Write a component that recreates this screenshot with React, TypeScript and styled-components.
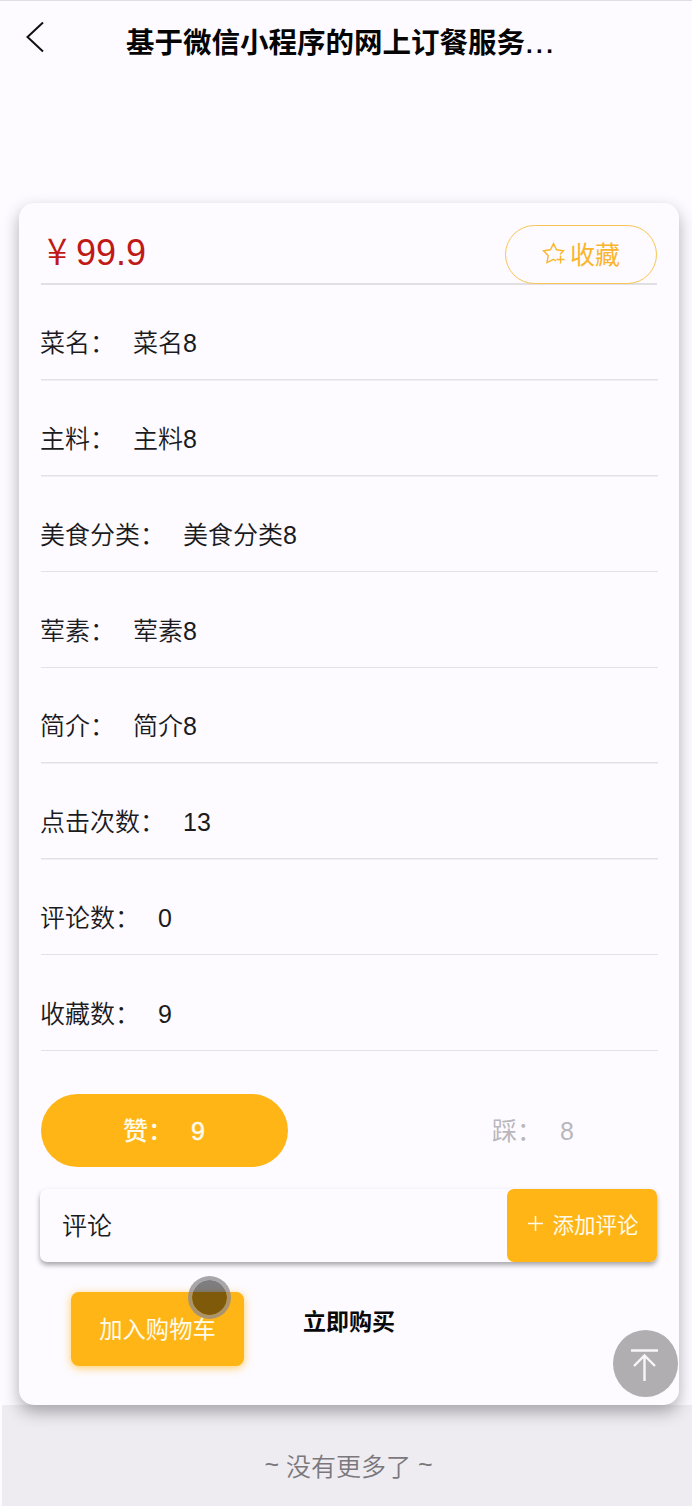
import React from "react";
import styled, { createGlobalStyle } from "styled-components";

const GlobalStyle = createGlobalStyle`
  * { box-sizing: border-box; }
  body {
    margin: 0;
    background: #fdfbff;
    color: #1b1a1d;
    font-family: "Liberation Sans", "Noto Sans CJK SC", sans-serif;
  }
  button { font: inherit; border: 0; margin: 0; padding: 0; }
`;

const orange = "#ffb516";

const Page = styled.main`
  position: relative;
  width: 692px;
  height: 1506px;
  overflow: hidden;
  display: flex;
  flex-direction: column;
`;

const Header = styled.header`
  height: 203px;
  flex: none;
  border-top: 1px solid #e0dee2;
  display: flex;
  align-items: flex-start;
`;

const BackIcon = styled.svg`
  width: 20px;
  height: 32px;
  margin: 20px 0 0 25px;
`;

const Title = styled.h1`
  margin: 21px 0 0 81px;
  font-size: 28.5px;
  line-height: 42px;
  font-weight: 700;
  color: #050506;
  white-space: nowrap;
`;

const Dots = styled.span`
  margin-left: 1px;
  font-size: 24px;
  letter-spacing: 3.4px;
`;

const Card = styled.section`
  position: relative;
  z-index: 1;
  flex: none;
  width: 660px;
  height: 1202px;
  margin-left: 19px;
  padding: 0 22px;
  border-radius: 15px;
  background: #fdfbff;
  box-shadow: 0 7px 16px rgba(50, 46, 56, 0.38);
`;

const PriceRow = styled.div`
  height: 82px;
  display: flex;
  justify-content: space-between;
  align-items: flex-end;
  border-bottom: 2px solid #e1dfe3;
`;

const Price = styled.div`
  display: flex;
  align-items: baseline;
  margin-left: 6px;
  height: 64px;
  font-size: 36px;
  line-height: 60px;
  color: #c01a16;
`;

const Yen = styled.span`
  width: 29px;
  font-family: "Noto Sans CJK SC", sans-serif;
  font-size: 37px;
  font-weight: 350;
`;

const FavoriteButton = styled.button`
  width: 152px;
  height: 59px;
  margin-bottom: -1px;
  padding: 0 0 3px;
  border: 1.5px solid #f8c455;
  border-radius: 30px;
  background: transparent;
  color: #f9b52c;
  font-size: 25px;
  display: flex;
  align-items: center;
  justify-content: center;
  gap: 3px;
`;

const StarIcon = styled.svg`
  width: 25px;
  height: 25px;
`;

const InfoRow = styled.div`
  height: 95.75px;
  display: flex;
  align-items: flex-end;
  gap: 18px;
  margin: 0 -1px;
  padding-bottom: 19.5px;
  font-size: 25px;
  line-height: 36px;
  font-weight: 350;
  background: linear-gradient(#e3e1e6, #e3e1e6) 1px 100% / 100% 1.5px no-repeat;
`;

const Votes = styled.div`
  display: flex;
  justify-content: space-between;
  margin-top: 43px;
`;

const VoteButton = styled.button<{ $active?: boolean }>`
  width: 247px;
  height: 73px;
  padding-right: 1px;
  border-radius: 37px;
  display: flex;
  align-items: baseline;
  justify-content: center;
  gap: 18px;
  font-size: 25px;
  line-height: 74px;
  font-weight: ${(p) => (p.$active ? 500 : 400)};
  background: ${(p) => (p.$active ? orange : "transparent")};
  color: ${(p) => (p.$active ? "#fffbea" : "#b9b7bb")};
`;

const Count = styled.span<{ $active?: boolean }>`
  -webkit-text-stroke: ${(p) => (p.$active ? "0.5px currentColor" : "0")};
`;

const CommentBar = styled.div`
  display: flex;
  justify-content: space-between;
  height: 73px;
  margin: 22px 0 0 -1px;
  border-radius: 7px;
  box-shadow: 0 3px 5px rgba(45, 42, 50, 0.42);
`;

const CommentLabel = styled.span`
  padding-left: 22px;
  font-size: 25px;
  line-height: 74px;
  font-weight: 350;
`;

const AddComment = styled.button`
  width: 150px;
  height: 73px;
  padding: 0 0 4px 2px;
  border-radius: 7px;
  background: ${orange};
  color: #fffbea;
  font-size: 21.5px;
  display: flex;
  align-items: center;
  justify-content: center;
  gap: 8px;
`;

const PlusIcon = styled.svg`
  width: 17px;
  height: 17px;
`;

const Actions = styled.div`
  display: flex;
  align-items: flex-start;
  margin: 30px 0 0 30px;
`;

const CartButton = styled.button`
  width: 173px;
  height: 74px;
  padding-bottom: 3px;
  border-radius: 8px;
  background: ${orange};
  color: #fffbea;
  font-size: 23.3px;
  box-shadow: 0 2px 9px rgba(255, 181, 22, 0.65);
`;

const BuyButton = styled.button`
  margin-left: 59px;
  height: 55px;
  background: transparent;
  color: #09090a;
  font-size: 23px;
  font-weight: 700;
`;

const Footer = styled.footer`
  flex: 1;
  margin-left: 2px;
  display: flex;
  justify-content: center;
  align-items: center;
  padding: 18px 0 0 3px;
  gap: 7px;
  background: #eeecf0;
  color: #7a787d;
  font-size: 25px;
  font-weight: 350;
`;

const BackToTop = styled.button`
  position: absolute;
  z-index: 2;
  left: 613px;
  top: 1330px;
  width: 65px;
  height: 67px;
  border-radius: 50%;
  background: #b0aeb1;
`;

const TouchPoint = styled.div`
  position: absolute;
  z-index: 2;
  left: 188px;
  top: 1276px;
  width: 43px;
  height: 43px;
  border-radius: 50%;
  border: 4px solid rgba(140, 138, 140, 0.75);
  background: rgba(0, 0, 0, 0.5);
  background-clip: padding-box;
`;

const details = [
  ["菜名", "菜名8"],
  ["主料", "主料8"],
  ["美食分类", "美食分类8"],
  ["荤素", "荤素8"],
  ["简介", "简介8"],
  ["点击次数", "13"],
  ["评论数", "0"],
  ["收藏数", "9"],
];

export default function App() {
  return (
    <Page>
      <GlobalStyle />
      <Header>
        <BackIcon viewBox="0 0 20 32" fill="none" stroke="#111" strokeWidth="2">
          <path d="M18 1.5 2.500 16 18 30.5" />
        </BackIcon>
        <Title>
          基于微信小程序的网上订餐服务<Dots>...</Dots>
        </Title>
      </Header>

      <Card>
        <PriceRow>
          <Price>
            <Yen>¥</Yen>
            <span>99.9</span>
          </Price>
          <FavoriteButton>
            <StarIcon viewBox="0 0 25 25" fill="none" stroke="currentColor" strokeWidth="1.4">
              <path d="M14 20 11.500 18.400 5 21.600 6.200 14.600 1.500 9.800 8.400 8.800 11.500 2.600 14.600 8.800 21.500 9.800 18 13.200" />
              <path d="M18.500 14.500v8M14.500 18.500h8" />
            </StarIcon>
            <span>收藏</span>
          </FavoriteButton>
        </PriceRow>

        {details.map(([label, value]) => (
          <InfoRow key={label}>
            <span>{label}：</span>
            <span>{value}</span>
          </InfoRow>
        ))}

        <Votes>
          <VoteButton $active>
            <span>赞：</span>
            <Count $active>9</Count>
          </VoteButton>
          <VoteButton>
            <span>踩：</span>
            <Count>8</Count>
          </VoteButton>
        </Votes>

        <CommentBar>
          <CommentLabel>评论</CommentLabel>
          <AddComment>
            <PlusIcon viewBox="0 0 17 17" stroke="currentColor" strokeWidth="1.5">
              <path d="M8.500 1v15M1 8.500h15" />
            </PlusIcon>
            <span>添加评论</span>
          </AddComment>
        </CommentBar>

        <Actions>
          <CartButton>加入购物车</CartButton>
          <BuyButton>立即购买</BuyButton>
        </Actions>
      </Card>

      <Footer>
        <span>~</span>
        <span>没有更多了</span>
        <span>~</span>
      </Footer>

      <TouchPoint />
      <BackToTop aria-label="返回顶部">
        <svg width="65" height="67" viewBox="0 0 65 67" fill="none" stroke="#f8f6f9" strokeWidth="2.4">
          <path d="M18 20.500h27M31.500 51V25M21 36 31.500 25.500 42 36" />
        </svg>
      </BackToTop>
    </Page>
  );
}
